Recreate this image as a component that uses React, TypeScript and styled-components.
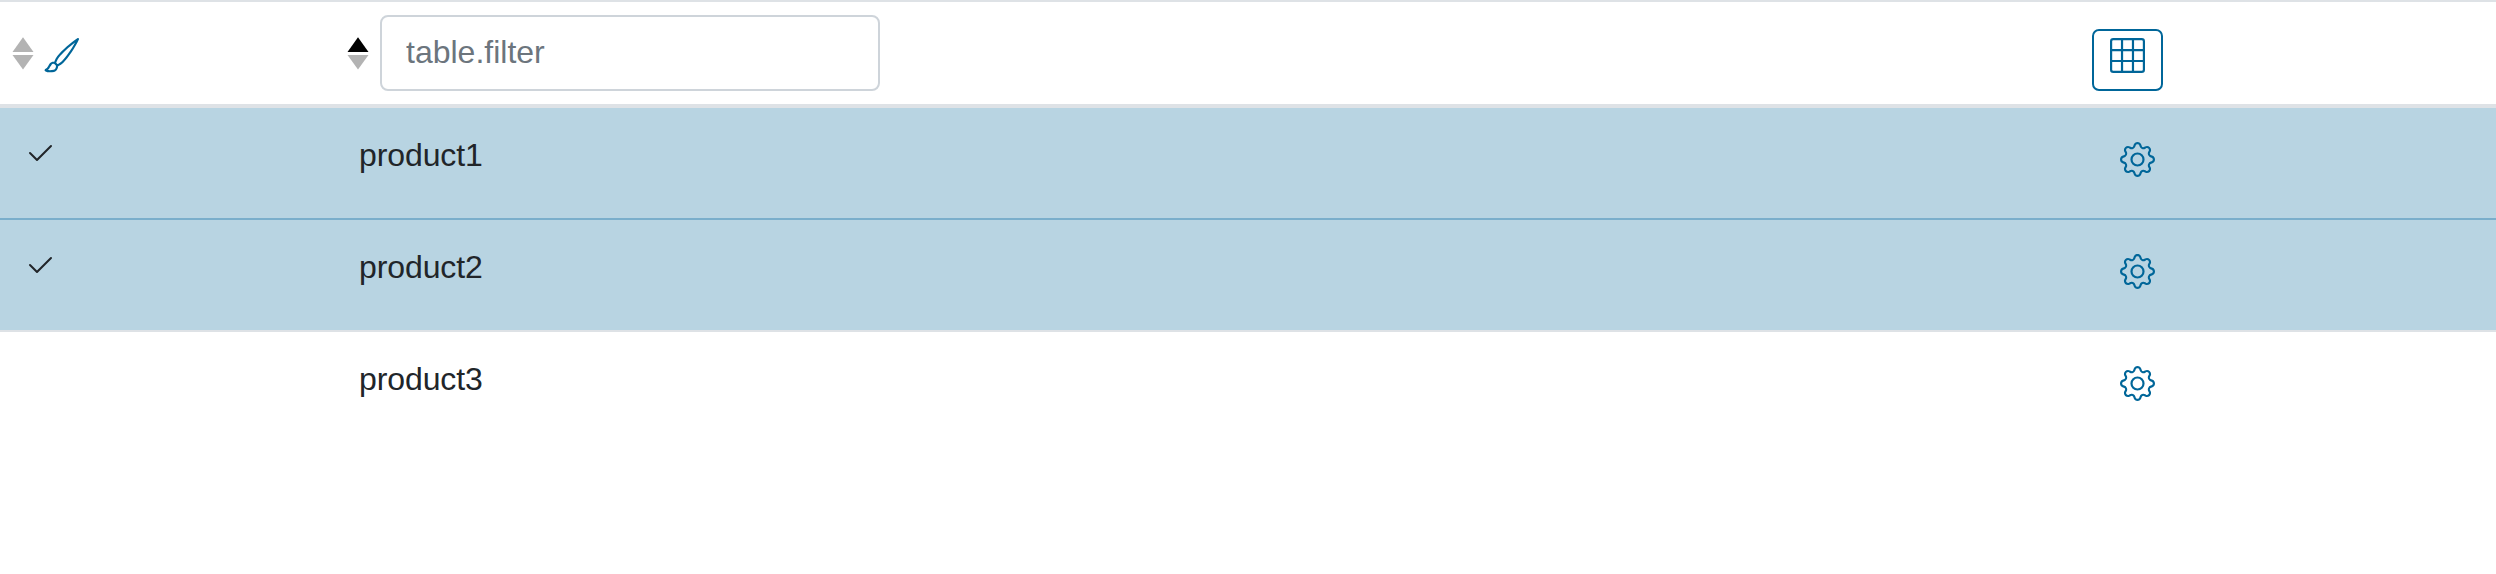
import React from "react";
import styled, { createGlobalStyle } from "styled-components";
import { BsBrush, BsCheck2, BsGear, BsGrid3X3 } from "react-icons/bs";

const GlobalStyle = createGlobalStyle`
  * { box-sizing: border-box; }
  body {
    margin: 0;
    background: #fff;
    color: #212529;
    font: 32px/48px "Liberation Sans", Arial, sans-serif;
  }
  svg { display: block; flex: none; }
`;

const BLUE = "#006699";

const Table = styled.div`
  width: 100%;
  height: 574px;
  overflow: hidden;
`;

const Line = styled.div`
  display: grid;
  grid-template-columns: 335px 1733px 1fr;
`;

const Header = styled(Line)`
  height: 108px;
  border-top: 2px solid #dee2e6;
  border-bottom: 4px solid #dee2e6;
`;

const Row = styled(Line)<{ $selected?: boolean; $divider?: string }>`
  height: ${(p) => (p.$divider ? 112 : 110)}px;
  background: ${(p) => (p.$selected ? "#b8d4e2" : "#fff")};
  border-bottom: ${(p) => (p.$divider ? `2px solid ${p.$divider}` : "0")};
`;

const HeadCell = styled.div<{ $left: number }>`
  display: flex;
  align-items: flex-start;
  padding-left: ${(p) => p.$left}px;
`;

const CheckCell = styled.div`
  padding: 30px 0 0 24px;
`;

const NameCell = styled.div`
  padding: 23px 24px;
  letter-spacing: -0.1px;
`;

const ActionCell = styled.div`
  padding: 34px 0 0 52px;
  color: ${BLUE};
`;

const SortSvg = styled.svg`
  margin-top: 35px;
`;

const BrushIcon = styled(BsBrush)`
  margin: 35.6px 0 0 10.4px;
  color: ${BLUE};
`;

const FilterInput = styled.input`
  width: 500px;
  height: 76px;
  margin: 13px 0 0 11px;
  padding: 0 24px 2px;
  border: 2px solid #ced4da;
  border-radius: 8px;
  background: #fff;
  font: inherit;
  color: #495057;
  &::placeholder { color: #6c757d; opacity: 1; }
`;

const ColumnsButton = styled.button`
  display: flex;
  align-items: flex-start;
  width: 71px;
  height: 62px;
  margin: 27px 0 0;
  padding: 7px 0 0 16px;
  border: 2px solid ${BLUE};
  border-radius: 7px;
  background: transparent;
  color: ${BLUE};
`;

function Sort({ ascending = false }: { ascending?: boolean }) {
  return (
    <SortSvg width="22" height="34" viewBox="0 0 22 34">
      <path d="M11 .2 21.5 15H.5z" fill={ascending ? "#000" : "#b3b3b3"} />
      <path d="M.5 18h21L11 32.4z" fill="#b3b3b3" />
    </SortSvg>
  );
}

const products = [
  { name: "product1", selected: true, divider: "#7aaecb" },
  { name: "product2", selected: true, divider: "#dee2e6" },
  { name: "product3", selected: false, divider: undefined },
];

export default function App() {
  return (
    <>
      <GlobalStyle />
      <Table>
        <Header>
          <HeadCell $left={12}>
            <Sort />
            <BrushIcon size={35} />
          </HeadCell>
          <HeadCell $left={12}>
            <Sort ascending />
            <FilterInput placeholder="table.filter" />
          </HeadCell>
          <HeadCell $left={24}>
            <ColumnsButton>
              <BsGrid3X3 size={35} />
            </ColumnsButton>
          </HeadCell>
        </Header>
        {products.map((p) => (
          <Row key={p.name} $selected={p.selected} $divider={p.divider}>
            <CheckCell>{p.selected && <BsCheck2 size={32} />}</CheckCell>
            <NameCell>{p.name}</NameCell>
            <ActionCell>
              <BsGear size={35} />
            </ActionCell>
          </Row>
        ))}
      </Table>
    </>
  );
}
